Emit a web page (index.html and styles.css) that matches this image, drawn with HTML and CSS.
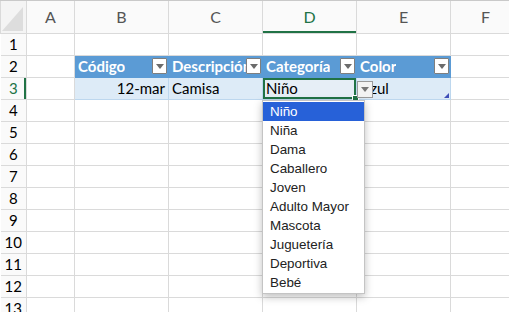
FILE: index.html
```html
<!DOCTYPE html>
<html lang="es">
<head>
    <meta name="viewport" content="width=device-width, initial-scale=1.0">
    <title>Hoja de cálculo</title>
    <link rel="stylesheet" href="styles.css">
</head>
<body>
    <div class="sheet">
        <table class="grid">
            <colgroup>
                <col class="c-head">
                <col class="c-a">
                <col class="c-b">
                <col class="c-c">
                <col class="c-d">
                <col class="c-e">
                <col class="c-f">
            </colgroup>
            <!-- Column letters -->
            <tr class="col-heads">
                <th class="corner"><span class="corner-tri"></span></th>
                <th>A</th>
                <th>B</th>
                <th>C</th>
                <th class="active">D</th>
                <th>E</th>
                <th>F</th>
            </tr>
            <tr>
                <th class="row-num">1</th>
                <td></td><td></td><td></td><td></td><td></td><td></td>
            </tr>
            <!-- Table header -->
            <tr>
                <th class="row-num">2</th>
                <td></td>
                <td class="t-head"><div class="t-cell"><span>Código</span><span class="filter"></span></div></td>
                <td class="t-head"><div class="t-cell"><span>Descripción</span><span class="filter"></span></div></td>
                <td class="t-head"><div class="t-cell"><span>Categoría</span><span class="filter"></span></div></td>
                <td class="t-head"><div class="t-cell"><span>Color</span><span class="filter"></span></div></td>
                <td></td>
            </tr>
            <tr>
                <th class="row-num active">3</th>
                <td></td>
                <td class="t-row num">12-mar</td>
                <td class="t-row">Camisa</td>
                <td class="t-row selected">Niño<span class="fill-handle"></span></td>
                <td class="t-row last">Azul<span class="resize-handle"></span></td>
                <td></td>
            </tr>
            <tr><th class="row-num">4</th><td></td><td></td><td></td><td></td><td></td><td></td></tr>
            <tr><th class="row-num">5</th><td></td><td></td><td></td><td></td><td></td><td></td></tr>
            <tr><th class="row-num">6</th><td></td><td></td><td></td><td></td><td></td><td></td></tr>
            <tr><th class="row-num">7</th><td></td><td></td><td></td><td></td><td></td><td></td></tr>
            <tr><th class="row-num">8</th><td></td><td></td><td></td><td></td><td></td><td></td></tr>
            <tr><th class="row-num">9</th><td></td><td></td><td></td><td></td><td></td><td></td></tr>
            <tr><th class="row-num">10</th><td></td><td></td><td></td><td></td><td></td><td></td></tr>
            <tr><th class="row-num">11</th><td></td><td></td><td></td><td></td><td></td><td></td></tr>
            <tr><th class="row-num">12</th><td></td><td></td><td></td><td></td><td></td><td></td></tr>
            <tr><th class="row-num">13</th><td></td><td></td><td></td><td></td><td></td><td></td></tr>
        </table>

        <!-- Validation list button next to D3 -->
        <span class="list-btn"></span>

        <!-- Open validation list -->
        <ul class="dropdown">
            <li class="current">Niño</li>
            <li>Niña</li>
            <li>Dama</li>
            <li>Caballero</li>
            <li>Joven</li>
            <li>Adulto Mayor</li>
            <li>Mascota</li>
            <li>Juguetería</li>
            <li>Deportiva</li>
            <li>Bebé</li>
        </ul>
    </div>
</body>
</html>
```

FILE: styles.css
```css
/* General */
body {
    margin: 0;
    background: #ffffff;
    font-family: Lato, 'Open Sans', sans-serif;
    overflow: hidden;
}

.sheet {
    position: relative;
    border-top: 1px solid #c9c9c9;
}

/* Grid */
.grid {
    border-collapse: collapse;
    table-layout: fixed;
    width: 520px;
}

.c-head { width: 26px; }
.c-a { width: 48px; }
.c-b { width: 94px; }
.c-c { width: 94px; }
.c-d { width: 94px; }
.c-e { width: 94px; }
.c-f { width: 70px; }

.grid tr {
    height: 22px;
}

.grid td,
.grid th {
    border: 1px solid #dadada;
    padding: 0 3px;
    font-size: 15px;
    font-weight: normal;
    white-space: nowrap;
    overflow: hidden;
    color: #000;
}

/* Column letters */
.col-heads {
    height: 32px !important;
}

.col-heads th {
    background: #fafafa;
    color: #555;
    font-size: 16px;
    border-top: none;
    text-align: center;
}

.col-heads th.active {
    color: #217346;
    box-shadow: inset 0 -2px 0 #217346;
}

.corner {
    position: relative;
    background: #f4f4f4 !important;
}

.corner-tri {
    position: absolute;
    right: 3px;
    bottom: 2px;
    width: 0;
    height: 0;
    border-left: 21px solid transparent;
    border-bottom: 24px solid #dddddd;
}

/* Row numbers */
.row-num {
    background: #fafafa;
    color: #555;
    font-size: 15px !important;
    text-align: center;
    padding: 0 !important;
    border-left: none !important;
}

.row-num.active {
    color: #217346;
    box-shadow: inset -2px 0 0 #217346;
}

/* Table header */
.t-head {
    background: #5b9bd5;
    border-color: #5b9bd5 !important;
    padding: 0 1px 0 3px !important;
}

.t-cell {
    display: flex;
    align-items: center;
    justify-content: space-between;
    color: #ffffff;
    font-weight: bold;
    font-size: 15px;
}

.t-cell span:first-child {
    overflow: hidden;
    white-space: nowrap;
}

.filter {
    flex: none;
    position: relative;
    width: 13px;
    height: 14px;
    background: #ffffff;
    border: 1px solid #7f7f7f;
    border-radius: 1px;
}

.filter::after,
.list-btn::after {
    content: "";
    position: absolute;
    left: 3px;
    top: 5px;
    border-left: 4px solid transparent;
    border-right: 4px solid transparent;
    border-top: 5px solid #6b6b6b;
}

/* Table row */
.t-row {
    background: #ddebf7;
    border-color: #bdd7ee !important;
    position: relative;
}

.t-row.num {
    text-align: right;
}

.t-row.selected {
    background: #e6eef6;
    box-shadow: inset 0 0 0 2px #217346;
    overflow: visible;
}

.fill-handle {
    position: absolute;
    right: -3px;
    bottom: -3px;
    width: 5px;
    height: 5px;
    background: #217346;
    border: 1px solid #ffffff;
    z-index: 2;
}

.resize-handle {
    position: absolute;
    right: 1px;
    bottom: 1px;
    border-left: 5px solid transparent;
    border-bottom: 5px solid #3f4fb8;
}

/* List button beside the active cell */
.list-btn {
    position: absolute;
    left: 357px;
    top: 80px;
    width: 14px;
    height: 15px;
    background: #f3f3f3;
    border: 1px solid #9a9a9a;
    z-index: 3;
}

.list-btn::after {
    left: 3px;
    top: 5px;
    border-top-color: #777;
}

/* Dropdown */
.dropdown {
    position: absolute;
    left: 262px;
    top: 99px;
    width: 101px;
    margin: 0;
    padding: 1px 0;
    list-style: none;
    background: #ffffff;
    border: 1px solid #c4c4c4;
    box-shadow: 0 3px 8px rgba(0, 0, 0, 0.25);
    font-family: 'Liberation Sans', Arial, sans-serif;
    font-size: 13.4px;
    z-index: 4;
}

.dropdown li {
    height: 19px;
    line-height: 19px;
    padding-left: 7px;
    color: #222;
}

.dropdown li.current {
    background: #2761d8;
    color: #ffffff;
}
```
